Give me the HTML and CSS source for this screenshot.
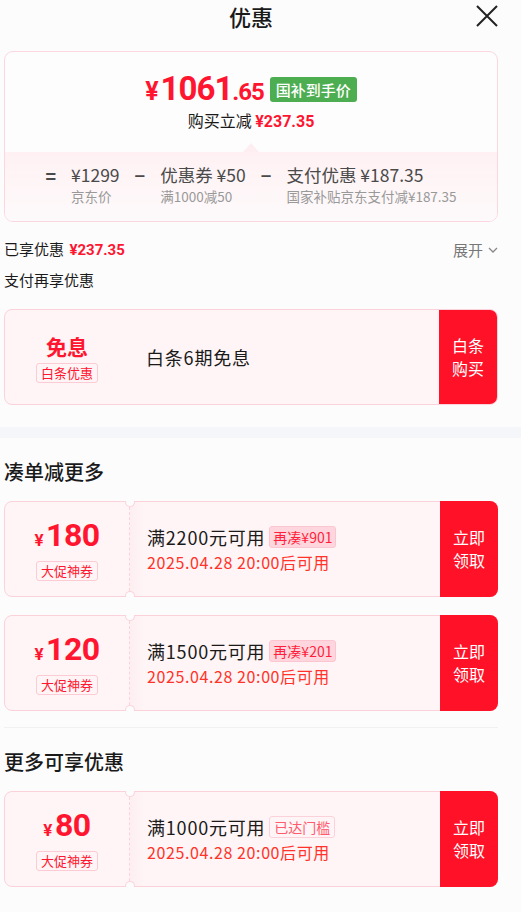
FILE: index.html
```html
<!DOCTYPE html>
<html lang="zh-CN">
<head>
    <meta charset="UTF-8">
    <title>优惠</title>
    <link rel="stylesheet" href="styles.css">
</head>
<body>
<div class="page">
    <div class="header">
        <span class="title">优惠</span>
        <svg class="close" width="22" height="22" viewBox="0 0 22 22"><path d="M1 1L21 21M21 1L1 21" stroke="#222" stroke-width="2" fill="none"/></svg>
    </div>

    <div class="summary">
        <div class="sumTop">
            <div class="final">
                <span class="finalPrice"><i>¥</i>1061<em>.65</em></span>
                <span class="greenTag">国补到手价</span>
            </div>
            <div class="cut">购买立减 <b>¥237.35</b></div>
            <span class="notch"></span>
        </div>
        <div class="sumBottom">
            <span class="op">=</span>
            <div class="item"><p>¥1299</p><span>京东价</span></div>
            <span class="op">−</span>
            <div class="item"><p>优惠券 ¥50</p><span>满1000减50</span></div>
            <span class="op">−</span>
            <div class="item"><p>支付优惠 ¥187.35</p><span>国家补贴京东支付减¥187.35</span></div>
        </div>
    </div>

    <div class="enjoyed">
        <span>已享优惠 <b>¥237.35</b></span>
        <span class="expand">展开 <svg width="10" height="6" viewBox="0 0 10 6"><path d="M1 1L5 5L9 1" stroke="#888" stroke-width="1.3" fill="none"/></svg></span>
    </div>
    <div class="subTitle">支付再享优惠</div>

    <div class="card">
        <div class="cardLeft">
            <div class="freeTxt">免息</div>
            <span class="tag">白条优惠</span>
        </div>
        <div class="cardMid"><p class="cond">白条6期免息</p></div>
        <div class="btn">白条<br>购买</div>
    </div>
</div>

<div class="band"></div>

<div class="page">
    <h2 class="secTitle">凑单减更多</h2>

    <div class="card coupon">
        <span class="cut1"></span><span class="cut2"></span>
        <div class="cardLeft">
            <div class="amount"><i>¥</i>180</div>
            <span class="tag">大促神券</span>
        </div>
        <div class="cardMid">
            <p class="cond">满2200元可用 <span class="pinkTag">再凑¥901</span></p>
            <p class="date">2025.04.28 20:00后可用</p>
        </div>
        <div class="btn">立即<br>领取</div>
    </div>

    <div class="card coupon">
        <span class="cut1"></span><span class="cut2"></span>
        <div class="cardLeft">
            <div class="amount"><i>¥</i>120</div>
            <span class="tag">大促神券</span>
        </div>
        <div class="cardMid">
            <p class="cond">满1500元可用 <span class="pinkTag">再凑¥201</span></p>
            <p class="date">2025.04.28 20:00后可用</p>
        </div>
        <div class="btn">立即<br>领取</div>
    </div>

    <div class="line"></div>

    <h2 class="secTitle">更多可享优惠</h2>

    <div class="card coupon">
        <span class="cut1"></span><span class="cut2"></span>
        <div class="cardLeft">
            <div class="amount"><i>¥</i>80</div>
            <span class="tag">大促神券</span>
        </div>
        <div class="cardMid">
            <p class="cond">满1000元可用 <span class="lineTag">已达门槛</span></p>
            <p class="date">2025.04.28 20:00后可用</p>
        </div>
        <div class="btn">立即<br>领取</div>
    </div>
</div>
</body>
</html>
```

FILE: styles.css
```css
body{
    margin:0;
    background:#fcfcfd;
    font-family:"Noto Sans CJK SC",sans-serif;
    color:#1a1a1a;
}
p{margin:0;}
i,em{font-style:normal;}
.page{padding:0 23px 0 4px;}

/* header */
.header{
    height:32px;
    display:flex;
    justify-content:center;
    align-items:center;
    position:relative;
    margin-bottom:19px;
}
.title{font-size:22px;font-weight:500;line-height:30px;}
.close{position:absolute;right:0;top:5px;}

/* summary */
.summary{
    border:1px solid #fdd7df;
    border-radius:9px;
    overflow:hidden;
    background:#fdfdfd;
}
.sumTop{
    position:relative;
    padding:19px 0 19px;
    display:flex;
    flex-direction:column;
    align-items:center;
}
.final{display:flex;align-items:center;height:38px;gap:6px;}
.finalPrice{
    font-family:Roboto,"Noto Sans CJK SC",sans-serif;
    font-weight:700;
    font-size:33px;
    line-height:38px;
    letter-spacing:-1px;
    color:#ff1530;
}
.finalPrice i{font-size:25px;margin-right:3px;}
.finalPrice em{font-size:24px;}
.greenTag{
    background:#4dad51;
    color:#fff;
    font-size:15px;
    font-weight:500;
    padding:0 6px;
    line-height:25px;
    border-radius:3px;
    margin-top:-2px;
}
.cut{font-size:16px;line-height:22px;}
.cut b{
    color:#ff1530;
    font-family:Roboto,"Noto Sans CJK SC",sans-serif;
    font-weight:700;
}
.notch{
    position:absolute;
    left:50%;
    bottom:0;
    margin-left:-8px;
    border:8px solid transparent;
    border-top:none;
    border-bottom:9px solid #fdeef1;
}
.sumBottom{
    background:linear-gradient(#fff1f3,#fdfafb);
    padding:12px 0 15px;
    display:flex;
    justify-content:center;
    gap:15px;
    color:#4a4a4a;
}
.op{font-size:18px;line-height:22px;font-weight:700;}
.item p{font-size:17.5px;line-height:22px;}
.item span{display:block;font-size:13.5px;line-height:20px;color:#999;}

/* enjoyed */
.enjoyed{
    margin-top:15px;
    display:flex;
    justify-content:space-between;
    align-items:center;
    font-size:15px;
    line-height:24px;
}
.enjoyed b{
    color:#ff1530;
    font-family:Roboto,"Noto Sans CJK SC",sans-serif;
    font-weight:700;
    margin-left:2px;
}
.expand{color:#777;display:flex;align-items:center;gap:5px;}
.subTitle{font-size:15px;line-height:24px;margin-top:6px;}

/* cards */
.card{
    margin-top:17px;
    height:94px;
    border:1px solid #fbd2da;
    border-radius:8px;
    background:#fff5f6;
    overflow:hidden;
    display:flex;
    position:relative;
}
.cardLeft{
    width:124px;
    display:flex;
    flex-direction:column;
    align-items:center;
    justify-content:center;
}
.freeTxt{font-size:21px;font-weight:700;color:#ff1530;line-height:28px;}
.tag{
    font-size:13px;
    color:#ff1530;
    line-height:18px;
    padding:0 4px;
    border:1px solid #fccbd3;
    border-radius:3px;
    margin-top:3px;
}
.cardMid{
    flex:1;
    padding-left:17px;
    display:flex;
    flex-direction:column;
    justify-content:center;
}
.cond{
    font-size:18px;
    line-height:26px;
    color:#1a1a1a;
    letter-spacing:0.8px;
    display:flex;
    align-items:center;
    gap:4px;
}
.cond span{letter-spacing:0;}
.date{font-size:16px;line-height:24px;color:#ff3329;letter-spacing:0.6px;}
.btn{
    width:58px;
    background:#ff1228;
    color:#fff;
    font-size:16px;
    line-height:23px;
    display:flex;
    align-items:center;
    justify-content:center;
    text-align:center;
}

/* coupons */
.coupon{overflow:visible;}
.coupon .btn{border-radius:0 8px 8px 0;margin:-1px -1px -1px 0;}
.coupon .cardMid{
    border-left:1px dashed #fbd3db;
    background:linear-gradient(90deg,#fdeef1,#fff5f6 14px);
}
.cut1,.cut2{
    position:absolute;
    left:120px;
    width:8px;
    height:5px;
    background:#fcfcfd;
    border:1px solid #fbd2da;
    z-index:1;
}
.cut1{top:-1px;border-top:none;border-radius:0 0 5px 5px;}
.cut2{bottom:-1px;border-bottom:none;border-radius:5px 5px 0 0;}
.amount{
    font-family:Roboto,"Noto Sans CJK SC",sans-serif;
    font-weight:700;
    font-size:32px;
    line-height:36px;
    color:#ff1530;
    letter-spacing:-0.5px;
}
.amount i{font-size:17px;margin-right:3px;}
.pinkTag{
    font-size:14px;
    line-height:20px;
    color:#ff1f3c;
    background:#ffd6de;
    border:1px solid #fcc6d0;
    border-radius:3px;
    padding:0 3px;
}
.lineTag{
    font-size:14px;
    line-height:20px;
    color:#ff5a6e;
    border:1px solid #fbd2da;
    border-radius:3px;
    padding:0 4px;
}

.band{height:11px;background:#f5f6fa;margin-top:22px;}

.secTitle{
    margin:0;
    margin-top:22px;
    font-size:20px;
    font-weight:500;
    line-height:24px;
}
.secTitle + .card{margin-top:17px;}
.coupon + .coupon{margin-top:18px;}
.line{height:1px;background:#f1f1f3;margin-top:16px;}
```
